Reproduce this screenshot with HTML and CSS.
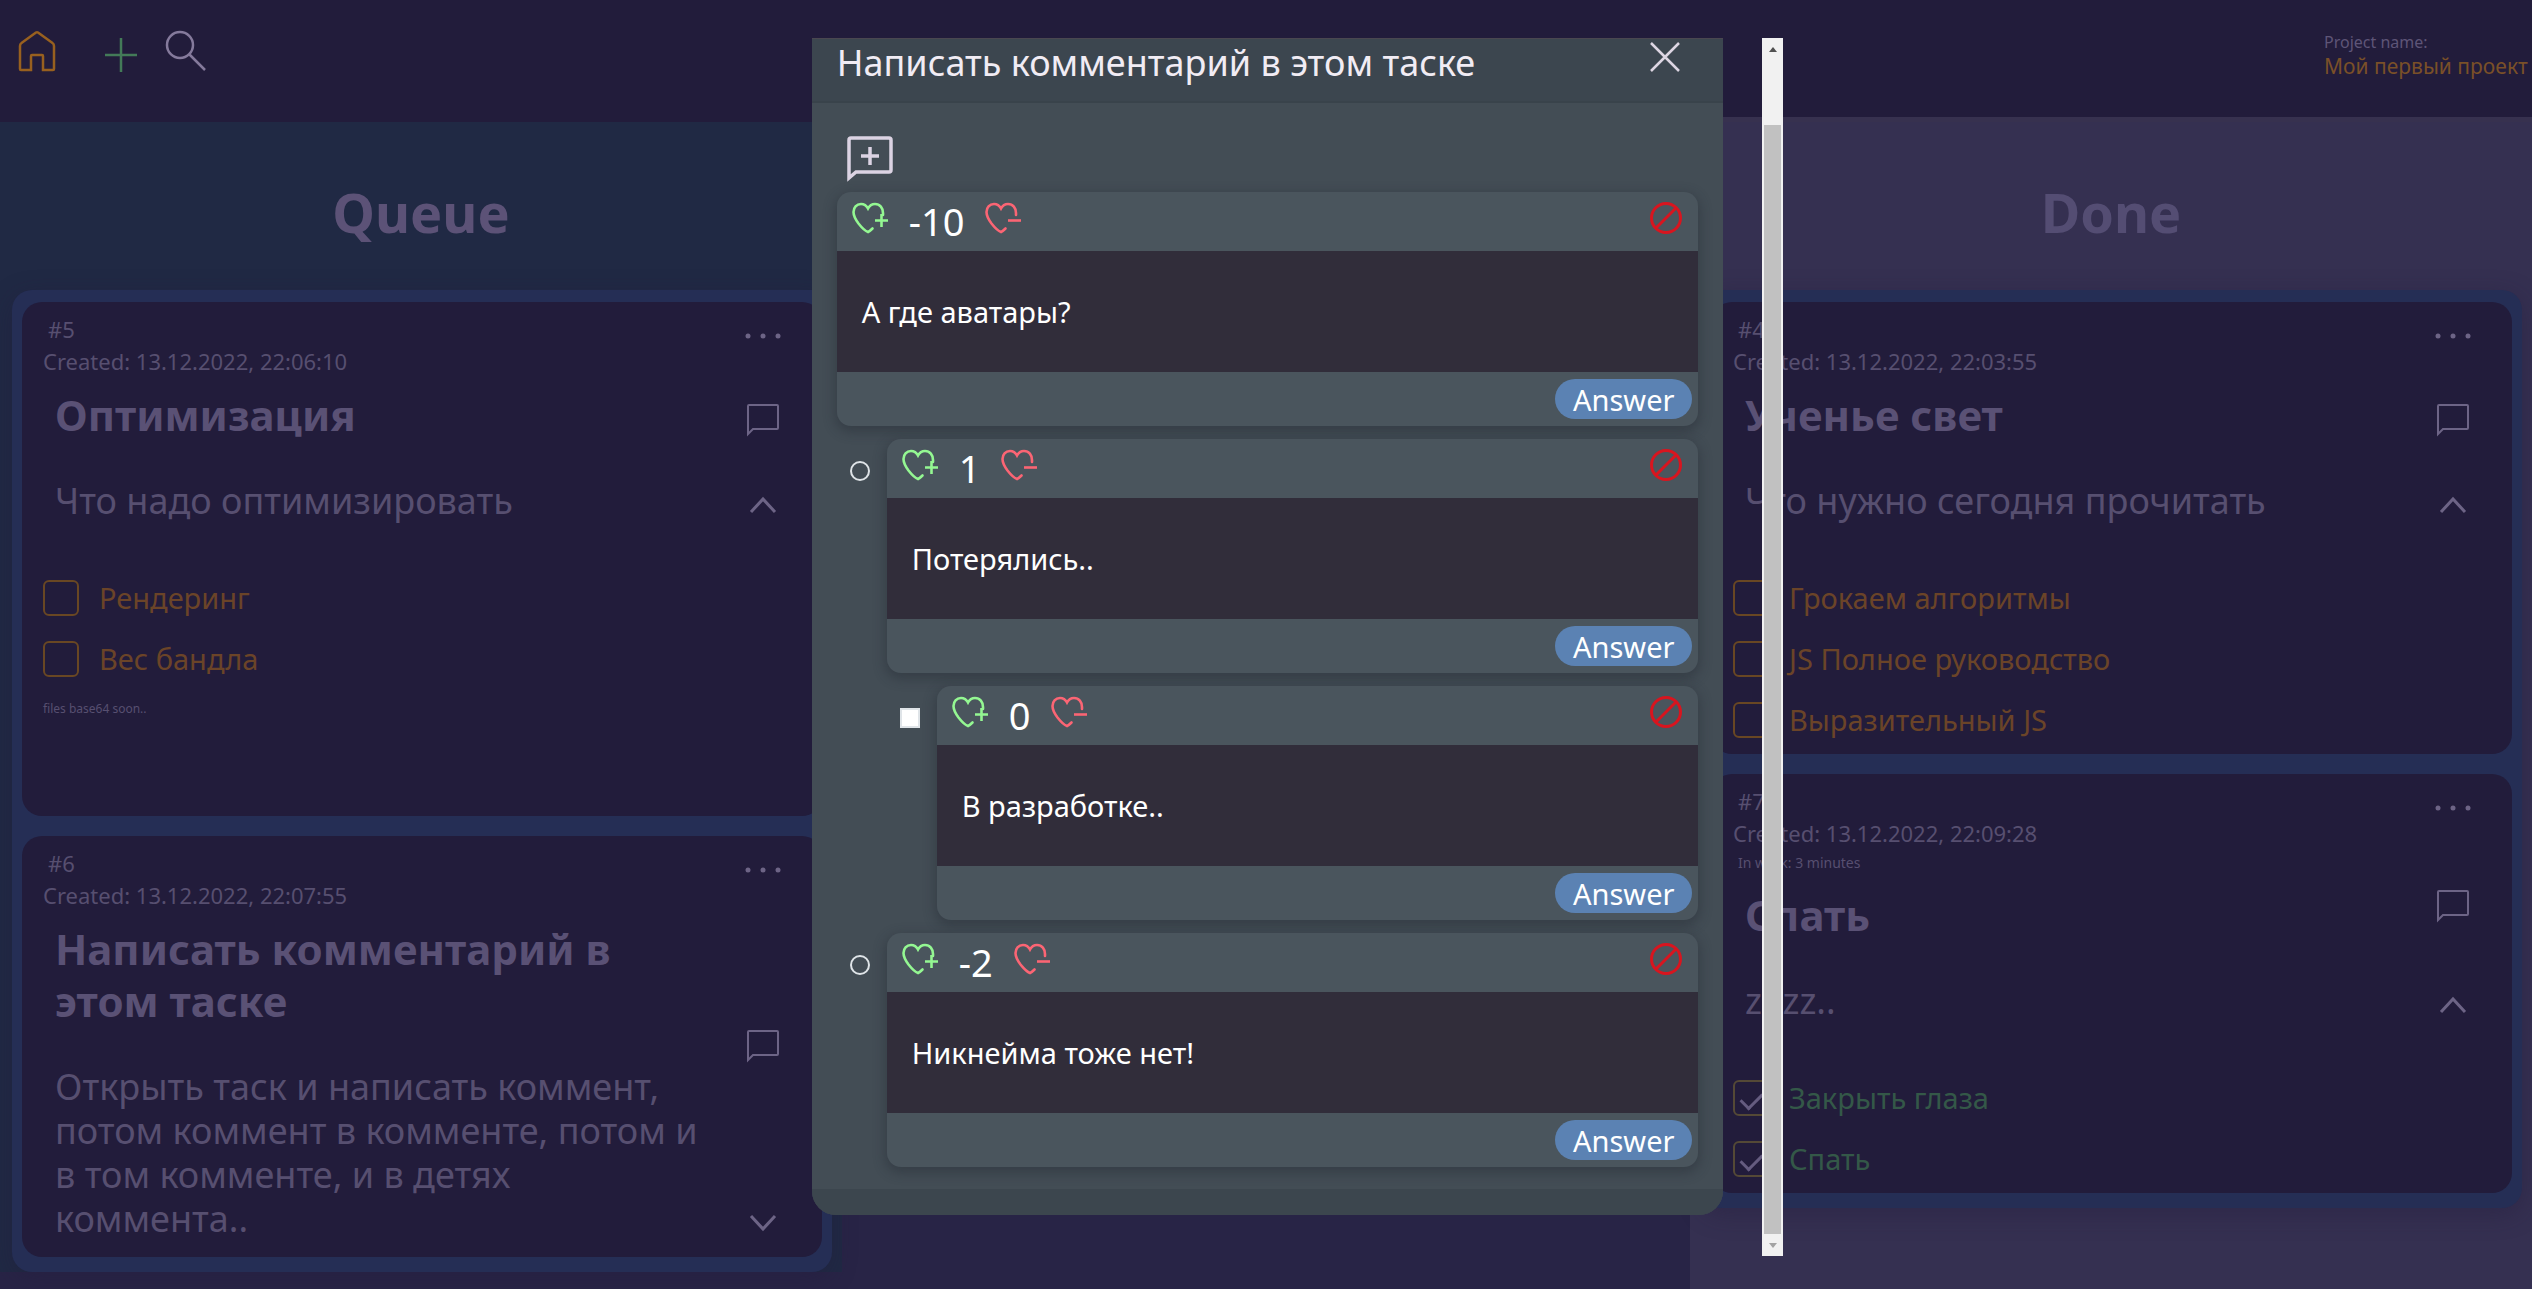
FILE: index.html
```html
<!DOCTYPE html>
<html lang="ru">
<head>
<meta charset="utf-8">
<meta name="viewport" content="width=device-width, initial-scale=1">
<title>Мой первый проект</title>
<link rel="stylesheet" href="styles.css">
</head>
<body>
<svg class="sprite" aria-hidden="true">
  <symbol id="dots" viewBox="0 0 36 36"><g fill="currentColor"><circle cx="3" cy="18" r="2.500"/><circle cx="18" cy="18" r="2.500"/><circle cx="33" cy="18" r="2.500"/></g></symbol>
  <symbol id="bubble" viewBox="0 0 36 36"><path d="M3 31V3q0-1 1-1h28q1 0 1 1v22q0 1-1 1H8z" fill="none" stroke="currentColor" stroke-width="2"/></symbol>
  <symbol id="up" viewBox="0 0 36 36"><path d="M6 25 18 12l12 13" fill="none" stroke="currentColor" stroke-width="3"/></symbol>
  <symbol id="down" viewBox="0 0 36 36"><path d="M6 11l12 13 12-13" fill="none" stroke="currentColor" stroke-width="3"/></symbol>
  <symbol id="heart" viewBox="0 0 36 32"><path d="M31 13V11C31 6 28 2 23 2c-3 0-5.500 1.600-7 4.500C14.500 3.600 12 2 9 2 4.500 2 1.500 5.500 1.500 10c0 4 2 7.500 5 11.500 3 3.800 6.500 7.500 9.500 8.500 1.500-.7 3-2 4.500-3.500" fill="none" stroke="currentColor" stroke-width="2.600" stroke-linecap="round"/></symbol>
  <symbol id="ban" viewBox="0 0 34 34"><g fill="none" stroke="currentColor" stroke-width="3"><circle cx="17" cy="17" r="14.500"/><path d="M7 27 27 7"/></g></symbol>
</svg>

<header class="topbar">
  <nav class="topbar-nav">
    <a href="#" class="icon-home" aria-label="Home"><svg width="38" height="42" viewBox="0 0 38 42"><path d="M2 39V16q0-2 1.500-3L18 2.500q1-.7 2 0L34.500 13q1.500 1 1.500 3v23q0 1-1 1H25V26q0-1-1-1H14q-1 0-1 1v14H3q-1 0-1-1z" fill="none" stroke="currentColor" stroke-width="2.500"/></svg></a>
    <button class="icon-add" aria-label="Add"><svg width="34" height="36" viewBox="0 0 34 36"><path d="M17 1v34M1 18h32" stroke="currentColor" stroke-width="2.500"/></svg></button>
    <button class="icon-search" aria-label="Search"><svg width="42" height="42" viewBox="0 0 42 42"><g fill="none" stroke="currentColor" stroke-width="2.500"><circle cx="15" cy="15" r="13"/><path d="M24.500 24.500 40 40"/></g></svg></button>
  </nav>
  <div class="project">
    <span class="project-label">Project name:</span>
    <span class="project-name">Мой первый проект</span>
  </div>
</header>

<main class="board">
  <section class="column column-queue">
    <h1 class="column-title">Queue</h1>
    <div class="cards">
      <article class="card">
        <div class="card-main">
          <p class="card-id">#5</p>
          <p class="card-date">Created: 13.12.2022, 22:06:10</p>
          <h2 class="card-title">Оптимизация</h2>
          <p class="card-text">Что надо оптимизировать</p>
        </div>
        <div class="card-tools">
          <button aria-label="Menu"><svg><use href="#dots"/></svg></button>
          <button aria-label="Comments"><svg><use href="#bubble"/></svg></button>
          <button aria-label="Collapse"><svg><use href="#up"/></svg></button>
        </div>
        <div class="card-checks">
          <label class="check"><input type="checkbox">Рендеринг</label>
          <label class="check"><input type="checkbox">Вес бандла</label>
        </div>
        <p class="card-files">files base64 soon..</p>
      </article>
      <article class="card">
        <div class="card-main">
          <p class="card-id">#6</p>
          <p class="card-date">Created: 13.12.2022, 22:07:55</p>
          <h2 class="card-title">Написать комментарий в этом таске</h2>
          <p class="card-text">Открыть таск и написать коммент, потом коммент в комменте, потом и в том комменте, и в детях коммента..</p>
        </div>
        <div class="card-tools">
          <button aria-label="Menu"><svg><use href="#dots"/></svg></button>
          <button aria-label="Comments"><svg><use href="#bubble"/></svg></button>
          <button aria-label="Expand"><svg><use href="#down"/></svg></button>
        </div>
      </article>
    </div>
  </section>

  <section class="column column-work"></section>

  <section class="column column-done">
    <h1 class="column-title">Done</h1>
    <div class="cards">
      <article class="card">
        <div class="card-main">
          <p class="card-id">#4</p>
          <p class="card-date">Created: 13.12.2022, 22:03:55</p>
          <h2 class="card-title">Ученье свет</h2>
          <p class="card-text">Что нужно сегодня прочитать</p>
        </div>
        <div class="card-tools">
          <button aria-label="Menu"><svg><use href="#dots"/></svg></button>
          <button aria-label="Comments"><svg><use href="#bubble"/></svg></button>
          <button aria-label="Collapse"><svg><use href="#up"/></svg></button>
        </div>
        <div class="card-checks">
          <label class="check"><input type="checkbox">Грокаем алгоритмы</label>
          <label class="check"><input type="checkbox">JS Полное руководство</label>
          <label class="check"><input type="checkbox">Выразительный JS</label>
        </div>
      </article>
      <article class="card">
        <div class="card-main">
          <p class="card-id">#7</p>
          <p class="card-date">Created: 13.12.2022, 22:09:28</p>
          <p class="card-work">In work: 3 minutes</p>
          <h2 class="card-title">Спать</h2>
          <p class="card-text">zZzz..</p>
        </div>
        <div class="card-tools">
          <button aria-label="Menu"><svg><use href="#dots"/></svg></button>
          <button aria-label="Comments"><svg><use href="#bubble"/></svg></button>
          <button aria-label="Collapse"><svg><use href="#up"/></svg></button>
        </div>
        <div class="card-checks">
          <label class="check"><input type="checkbox" checked>Закрыть глаза</label>
          <label class="check"><input type="checkbox" checked>Спать</label>
        </div>
      </article>
    </div>
  </section>
</main>

<div class="overlay">
  <div class="dialog" role="dialog" aria-labelledby="dialog-title">
    <div class="dialog-head">
      <h2 id="dialog-title">Написать комментарий в этом таске</h2>
      <button class="close" aria-label="Close"><svg width="32" height="32" viewBox="0 0 32 32"><path d="M2 2l28 28M30 2 2 30" stroke="currentColor" stroke-width="2.500"/></svg></button>
    </div>
    <div class="dialog-body">
      <button class="new-comment" aria-label="New comment"><svg width="46" height="46" viewBox="0 0 46 46"><g fill="none" stroke="currentColor" stroke-width="3.500"><path d="M2 42V4q0-2 2-2h38q2 0 2 2v30q0 2-2 2H9z"/><path d="M23 11v18M14 20h18"/></g></svg></button>
      <div class="comments">
        <article class="comment">
          <header><button class="plus" aria-label="Like"><svg viewBox="0 0 36 32"><use href="#heart"/><path d="M23 18.500h13M29.500 12v13" stroke="currentColor" stroke-width="2.600"/></svg></button><span class="score">-10</span><button class="minus" aria-label="Dislike"><svg viewBox="0 0 36 32"><use href="#heart"/><path d="M23 18.500h13" stroke="currentColor" stroke-width="2.600"/></svg></button><button class="remove" aria-label="Delete"><svg><use href="#ban"/></svg></button></header>
          <p>А где аватары?</p>
          <footer><button class="answer">Answer</button></footer>
        </article>
        <ul class="replies">
          <li>
            <article class="comment">
              <header><button class="plus" aria-label="Like"><svg viewBox="0 0 36 32"><use href="#heart"/><path d="M23 18.500h13M29.500 12v13" stroke="currentColor" stroke-width="2.600"/></svg></button><span class="score">1</span><button class="minus" aria-label="Dislike"><svg viewBox="0 0 36 32"><use href="#heart"/><path d="M23 18.500h13" stroke="currentColor" stroke-width="2.600"/></svg></button><button class="remove" aria-label="Delete"><svg><use href="#ban"/></svg></button></header>
              <p>Потерялись..</p>
              <footer><button class="answer">Answer</button></footer>
            </article>
            <ul class="replies replies-deep">
              <li>
                <article class="comment">
                  <header><button class="plus" aria-label="Like"><svg viewBox="0 0 36 32"><use href="#heart"/><path d="M23 18.500h13M29.500 12v13" stroke="currentColor" stroke-width="2.600"/></svg></button><span class="score">0</span><button class="minus" aria-label="Dislike"><svg viewBox="0 0 36 32"><use href="#heart"/><path d="M23 18.500h13" stroke="currentColor" stroke-width="2.600"/></svg></button><button class="remove" aria-label="Delete"><svg><use href="#ban"/></svg></button></header>
                  <p>В разработке..</p>
                  <footer><button class="answer">Answer</button></footer>
                </article>
              </li>
            </ul>
          </li>
          <li>
            <article class="comment">
              <header><button class="plus" aria-label="Like"><svg viewBox="0 0 36 32"><use href="#heart"/><path d="M23 18.500h13M29.500 12v13" stroke="currentColor" stroke-width="2.600"/></svg></button><span class="score">-2</span><button class="minus" aria-label="Dislike"><svg viewBox="0 0 36 32"><use href="#heart"/><path d="M23 18.500h13" stroke="currentColor" stroke-width="2.600"/></svg></button><button class="remove" aria-label="Delete"><svg><use href="#ban"/></svg></button></header>
              <p>Никнейма тоже нет!</p>
              <footer><button class="answer">Answer</button></footer>
            </article>
          </li>
        </ul>
      </div>
    </div>
    <div class="dialog-foot"></div>
  </div>
  <div class="scrollbar" aria-hidden="true">
    <span class="arrow arrow-up"></span>
    <span class="thumb"></span>
    <span class="arrow arrow-down"></span>
  </div>
</div>
</body>
</html>
```
FILE: styles.css
```css
* { box-sizing: border-box; }

body {
  margin: 0;
  min-height: 100vh;
  display: flex;
  flex-direction: column;
  overflow: hidden;
  background: #282446;
  color: #574f70;
  font-family: "Noto Sans", "Open Sans", sans-serif;
}

h1, h2, p, ul { margin: 0; padding: 0; }

button {
  display: flex;
  padding: 0;
  border: 0;
  background: none;
  color: inherit;
  font: inherit;
}

.sprite { position: absolute; width: 0; height: 0; }

/* top bar */
.topbar {
  height: 117px;
  display: flex;
  justify-content: space-between;
  align-items: flex-start;
  padding: 30px 0 0 18px;
  background: #221c3b;
}
.topbar-nav { display: flex; }
.topbar-nav svg { display: block; }
.icon-home { color: #98601f; }
.icon-add { margin: 7px 0 0 48px; color: #437a58; }
.icon-search { margin-left: 27px; color: #857a9c; }
.project { width: 208px; display: flex; flex-direction: column; white-space: nowrap; }
.project-label { font-size: 16px; line-height: 24px; color: #5e5577; }
.project-name { font-size: 21px; line-height: 24px; color: #7a5028; }

/* board */
.board {
  flex: 1;
  display: grid;
  grid-template-columns: repeat(3, minmax(0, 1fr));
  column-gap: 3px;
}
.column-queue { align-self: start; background: #202944; border-top: 5px solid #221c3b; }
.column-done { background: #353051; border-top: 5px solid #37314f; }
.column-title {
  padding-top: 12px;
  font-size: 54px;
  line-height: 156px;
  text-align: center;
  color: #5c5277;
}
.column-done .column-title { color: #544d73; }

.cards {
  display: flex;
  flex-direction: column;
  gap: 20px;
  margin: 0 10px 0 12px;
  padding: 12px 10px 15px;
  border-radius: 20px;
  background: #252e55;
  box-shadow: 0 6px 24px rgba(34, 28, 59, 0.4);
}
.card {
  display: grid;
  grid-template-columns: 1fr auto;
  padding: 0 41px 16px 21px;
  border-radius: 20px;
  background: #221c3b;
}
.card-main { padding: 11px 36px 0 0; }
.card-id { padding-left: 5px; font-size: 22px; line-height: 32px; }
.card-date { font-size: 22px; line-height: 32px; }
.card-work { padding-left: 5px; font-size: 14px; line-height: 28px; }
.card-title { padding: 12px 0 0 12px; font-size: 42px; line-height: 52px; color: #5a5175; }
.card-text { padding: 38px 0 0 12px; font-size: 36px; line-height: 44px; }
.card-tools {
  display: flex;
  flex-direction: column;
  justify-content: space-between;
  padding-top: 16px;
  color: #6d6486;
}
.card-tools svg { width: 36px; height: 36px; }
.card-checks {
  grid-column: 1 / -1;
  display: flex;
  flex-direction: column;
  gap: 25px;
  padding-top: 57px;
}
.check {
  display: flex;
  align-items: center;
  gap: 20px;
  font-size: 29px;
  line-height: 36px;
  color: #6b4428;
}
.check:has(:checked) { color: #345848; }
.check input {
  display: grid;
  place-items: center;
  appearance: none;
  width: 36px;
  height: 36px;
  margin: 0;
  border: 2px solid #694723;
  border-radius: 6px;
}
.check input:checked { border-color: #544936; }
.check input:checked::before {
  content: "";
  width: 10px;
  height: 18px;
  border: solid #655c80;
  border-width: 0 3px 3px 0;
  transform: rotate(45deg);
}
.card-files { min-height: 123px; padding-top: 22px; font-size: 12px; line-height: 20px; }

/* dialog */
.overlay {
  position: fixed;
  inset: 38px 0 33px;
  display: flex;
  justify-content: center;
  align-items: flex-start;
  padding-left: 63px;
}
.dialog {
  flex: 0 0 36vw;
  border-radius: 0 0 24px 24px;
  overflow: hidden;
  background: #434d55;
  color: #fff;
}
.dialog-head {
  display: flex;
  justify-content: space-between;
  align-items: flex-start;
  height: 65px;
  padding: 0 42px 0 25px;
  border-top: 1px solid #4a4750;
  border-bottom: 2px solid #39434b;
  background: #3c464f;
}
.dialog-head h2 { font-size: 36px; font-weight: 400; line-height: 48px; color: #f1ecf4; }
.close { padding-top: 2px; color: #ddd6e3; }
.dialog-body { padding: 33px 25px 22px; }
.new-comment { margin: 0 0 10px 10px; color: #dcd3e3; }
.comments { display: flex; flex-direction: column; gap: 13px; }
.replies {
  display: flex;
  flex-direction: column;
  gap: 13px;
  padding-left: 50px;
  list-style: none;
}
.replies li { position: relative; display: flex; flex-direction: column; gap: 13px; }
.replies li::before {
  content: "";
  position: absolute;
  top: 22px;
  left: -37px;
  width: 16px;
  height: 16px;
  border: 2px solid #dfe4e8;
  border-radius: 50%;
}
.replies-deep li::before { border-radius: 0; background: #fff; }
.comment {
  border-radius: 14px;
  background: #4a555d;
  box-shadow: 0 4px 12px 2px rgba(37, 45, 54, 0.45);
}
.comment header { display: flex; align-items: center; height: 59px; padding: 0 15px 7px; }
.comment header svg { width: 36px; height: 32px; overflow: visible; }
.plus { color: #94f792; }
.minus { color: #fb6574; }
.comment header .remove { margin-left: auto; color: #d8151f; }
.comment header .remove svg { width: 34px; height: 34px; }
.score { padding: 5px 21px 0; font-size: 38px; line-height: 48px; }
.comment p {
  height: 121px;
  padding-left: 25px;
  background: #312d3a;
  font-size: 29px;
  line-height: 122px;
}
.comment footer { display: flex; justify-content: flex-end; height: 54px; padding: 7px 6px; }
.answer {
  justify-content: center;
  width: 137px;
  height: 40px;
  border-radius: 20px;
  background: #5b82b3;
  font-size: 29px;
  line-height: 42px;
}
.dialog-foot { height: 26px; background: #3c464e; }

.scrollbar {
  align-self: stretch;
  display: flex;
  flex-direction: column;
  flex: 0 0 21px;
  margin-left: 39px;
  padding: 0 2px;
  background: #f1f1f1;
}
.arrow { height: 22px; display: grid; place-items: center; }
.arrow::before { content: ""; border: 4px solid transparent; }
.arrow-up::before { border-bottom: 5px solid #505050; border-top: 0; }
.arrow-down::before { border-top: 5px solid #a3a3a3; border-bottom: 0; }
.thumb { flex: 1; margin-top: 65px; background: #c1c1c1; }
```
